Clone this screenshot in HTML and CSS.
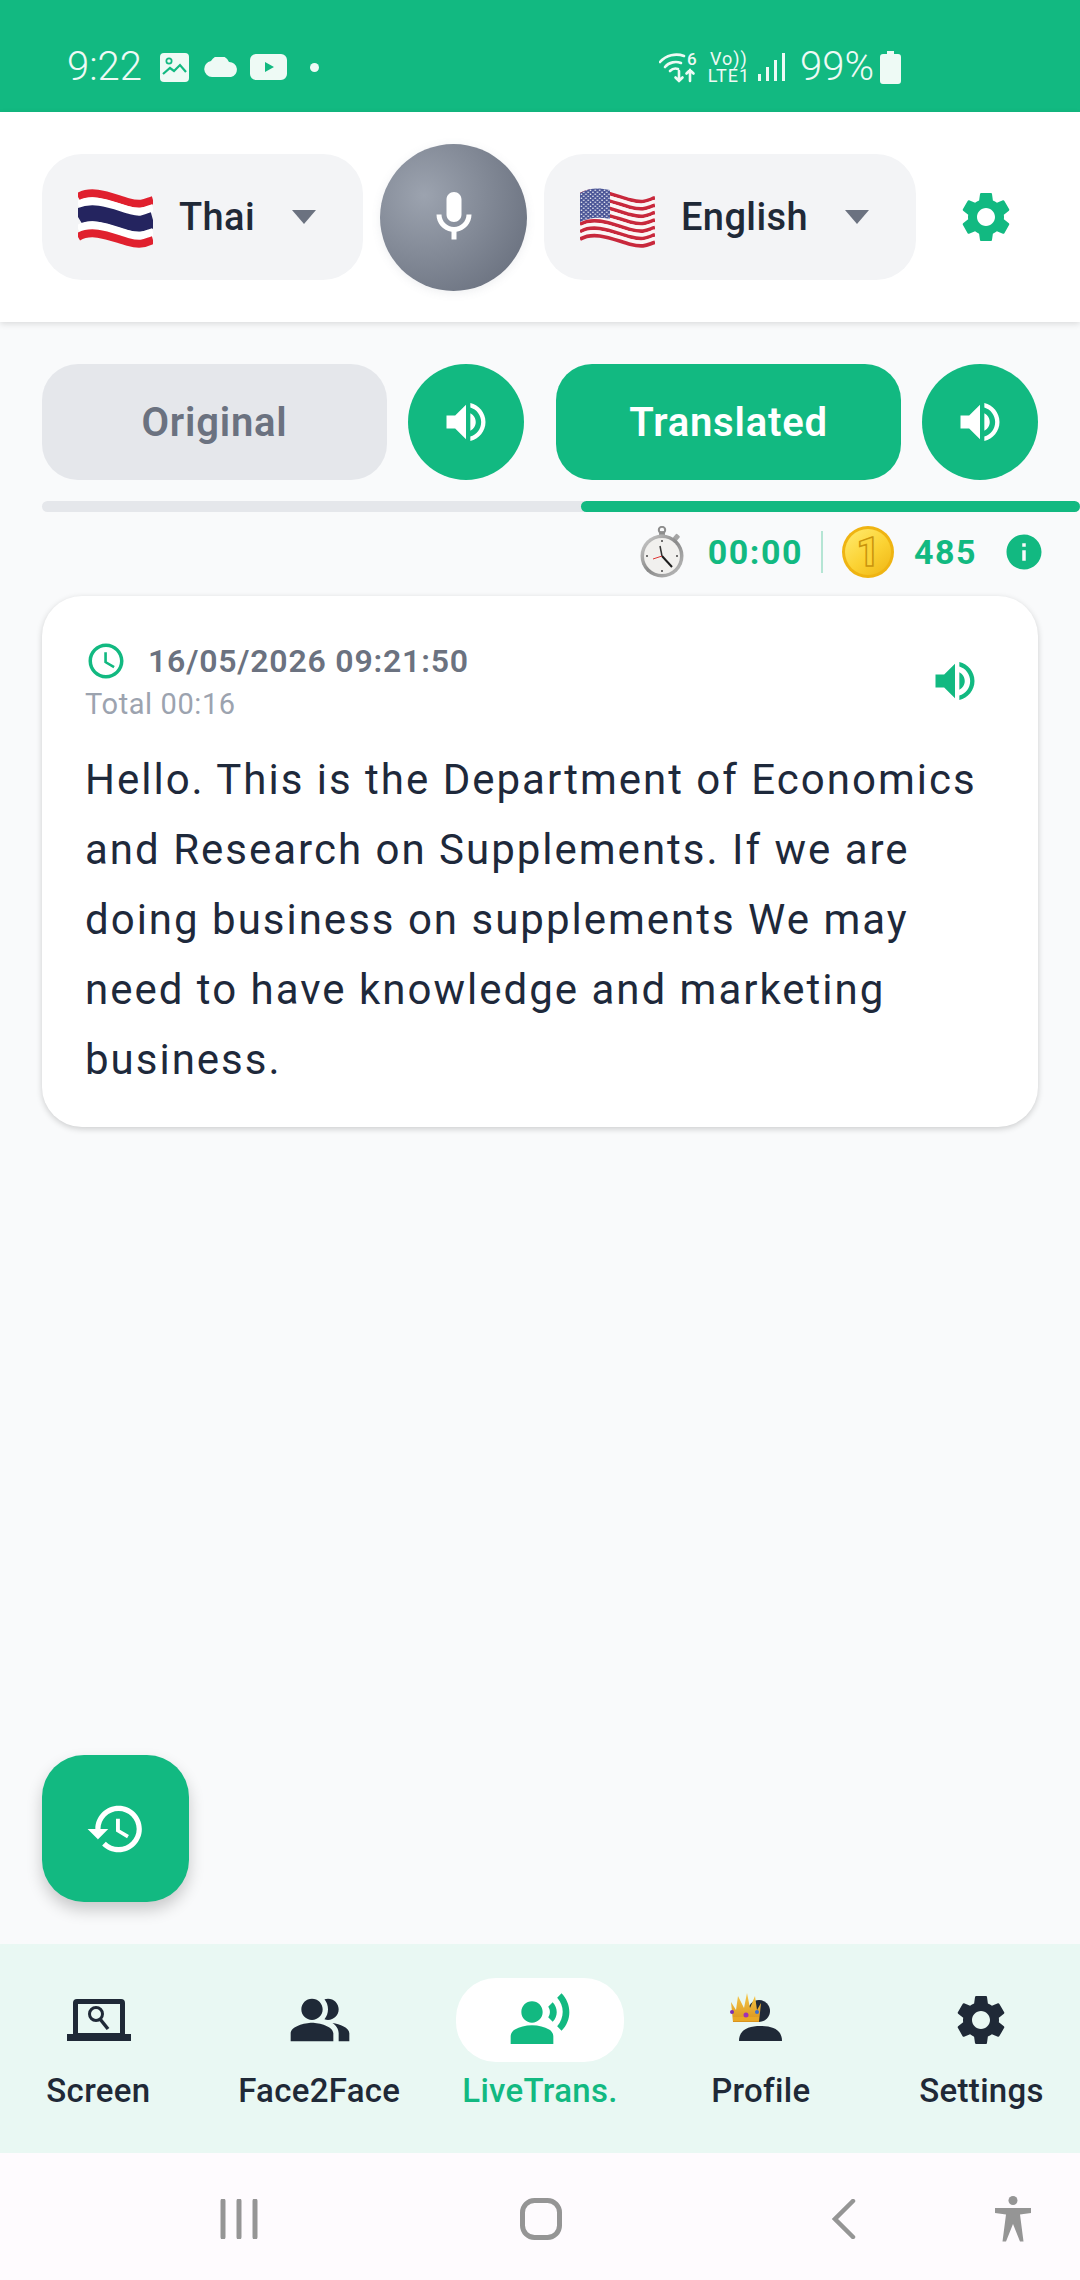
FILE: index.html
```html
<!DOCTYPE html>
<html lang="en">
<head>
    <meta charset="UTF-8">
    <meta name="viewport" content="width=device-width, initial-scale=1.0">
    <title>LiveTrans</title>
    <link rel="stylesheet" href="styles.css">
</head>
<body>
    <!-- shared icons -->
    <svg class="sprite" width="0" height="0">
        <defs>
            <symbol id="i-gear" viewBox="0 0 24 24"><path d="M19.14 12.94c.04-.3.06-.61.06-.94 0-.32-.02-.64-.07-.94l2.03-1.58c.18-.14.23-.41.12-.61l-1.92-3.32c-.12-.22-.37-.29-.59-.22l-2.39.96c-.5-.38-1.03-.7-1.62-.94l-.36-2.54c-.04-.24-.24-.41-.48-.41h-3.84c-.24 0-.43.17-.47.41l-.36 2.54c-.59.24-1.13.57-1.62.94l-2.39-.96c-.22-.08-.47 0-.59.22L2.74 8.87c-.12.21-.08.47.12.61l2.03 1.58c-.05.3-.09.63-.09.94s.02.64.07.94l-2.03 1.58c-.18.14-.23.41-.12.61l1.92 3.32c.12.22.37.29.59.22l2.39-.96c.5.38 1.03.7 1.62.94l.36 2.54c.05.24.24.41.48.41h3.84c.24 0 .44-.17.47-.41l.36-2.54c.59-.24 1.13-.56 1.62-.94l2.39.96c.22.08.47 0 .59-.22l1.92-3.32c.12-.22.07-.47-.12-.61l-2.01-1.58zM12 15.6c-1.98 0-3.6-1.62-3.6-3.6s1.62-3.6 3.6-3.6 3.6 1.62 3.6 3.6-1.62 3.6-3.6 3.6z"/></symbol>
            <symbol id="i-volume" viewBox="0 0 24 24"><path d="M3 9v6h4l5 5V4L7 9H3zm13.5 3c0-1.77-1.02-3.29-2.5-4.03v8.05c1.48-.73 2.5-2.25 2.5-4.02zM14 3.23v2.06c2.89.86 5 3.54 5 6.71s-2.11 5.85-5 6.71v2.06c4.01-.91 7-4.49 7-8.77s-2.99-7.86-7-8.77z"/></symbol>
            <symbol id="i-caret" viewBox="0 0 24 14"><path d="M0 0h24L12 14z"/></symbol>
            <symbol id="i-info" viewBox="0 0 24 24"><path d="M12 2C6.480 2 2 6.480 2 12s4.480 10 10 10 10-4.480 10-10S17.520 2 12 2zm1 15h-2v-6h2v6zm0-8h-2V7h2v2z"/></symbol>
            <path id="wave" d="M0 0C15-9 35 1 50 5S68 5 75 3" fill="none"/>
            <pattern id="stars" width="4.600" height="4" patternUnits="userSpaceOnUse"><circle cx="1.400" cy="1.200" r=".8" fill="#fff"/><circle cx="3.700" cy="3.200" r=".8" fill="#fff"/></pattern>
            <radialGradient id="mic-bg" cx=".3" cy=".35" r=".8"><stop offset="0" stop-color="#9ca3af"/><stop offset="1" stop-color="#6b7280"/></radialGradient>
            <linearGradient id="coin-bg" x1=".1" y1="0" x2=".9" y2="1"><stop offset="0" stop-color="#ffe96b"/><stop offset=".55" stop-color="#fbd233"/><stop offset="1" stop-color="#f0b818"/></linearGradient>
            <linearGradient id="watch-rim" x1="0" y1="0" x2="1" y2="1"><stop offset="0" stop-color="#d4d4d4"/><stop offset=".5" stop-color="#8a8a8a"/><stop offset="1" stop-color="#c2c2c2"/></linearGradient>
            <linearGradient id="crown-bg" x1="0" y1="0" x2="0" y2="1"><stop offset="0" stop-color="#f7c948"/><stop offset="1" stop-color="#d9921c"/></linearGradient>
        </defs>
    </svg>

    <div class="status-bar">
        <div class="status-left">
            <span class="status-time">9:22</span>
            <svg class="st-img" viewBox="0 0 29 29">
                <rect width="29" height="29" rx="4"/>
                <circle cx="9" cy="8" r="3.500" fill="#12b981"/>
                <circle cx="9" cy="8" r="1.800"/>
                <path d="M3 21l7-6 4 3 6-6 6 7" fill="none" stroke="#12b981" stroke-width="2.200"/>
            </svg>
            <svg class="st-cloud" viewBox="0 0 35 20"><path d="M8 20a8 8 0 0 1-1-15.900A10 10 0 0 1 25 5a7.600 7.600 0 0 1 2 15z"/></svg>
            <svg class="st-yt" viewBox="0 0 37 26"><path fill-rule="evenodd" d="M6 0h25a6 6 0 0 1 6 6v14a6 6 0 0 1-6 6H6a6 6 0 0 1-6-6V6a6 6 0 0 1 6-6zM15 8v10l9-5z"/></svg>
            <span class="st-dot"></span>
        </div>
        <div class="status-right">
            <svg class="st-wifi" viewBox="0 -6 40 38">
                <g fill="none" stroke="currentColor" stroke-width="2.600" stroke-linecap="round">
                    <path d="M1 11C7 4 17 2 25 5"/><path d="M6 16c4-5 11-6 16-4"/><path d="M11 20c2-2 5-3 8-2"/>
                    <path d="M20 20v10m-3.500-3.500L20 30l3.500-3.500"/><path d="M31 30V19m-3.500 3.500L31 19l3.500 3.500"/>
                </g>
                <text x="28" y="14" class="st-six">6</text>
            </svg>
            <div class="st-volte"><span>Vo))</span><span>LTE1</span></div>
            <svg class="st-signal" viewBox="0 0 28 28"><path d="M1 21h3v7H1zM9 14h3v14H9zM17 7h3v21h-3zM25 0h3v28h-3z"/></svg>
            <span class="status-pct">99%</span>
            <svg class="st-batt" viewBox="0 0 21 33"><path d="M7 0h7v3h4a3 3 0 0 1 3 3v24a3 3 0 0 1-3 3H3a3 3 0 0 1-3-3V6a3 3 0 0 1 3-3h4z"/></svg>
        </div>
    </div>

    <div class="top-bar">
        <div class="lang-pill lang-thai">
            <svg class="flag" viewBox="0 -7 75 62">
                <use href="#wave" y="4" stroke="#e0202e" stroke-width="8"/>
                <use href="#wave" y="12" stroke="#fff" stroke-width="8"/>
                <use href="#wave" y="24" stroke="#24245f" stroke-width="16"/>
                <use href="#wave" y="36" stroke="#fff" stroke-width="8"/>
                <use href="#wave" y="44" stroke="#e0202e" stroke-width="8"/>
            </svg>
            <span class="lang-name">Thai</span>
            <svg class="caret"><use href="#i-caret"/></svg>
        </div>
        <div class="mic-button">
            <svg class="mic-bg" viewBox="0 0 100 100"><circle cx="50" cy="50" r="50" fill="url(#mic-bg)"/></svg>
            <svg class="mic-icon" viewBox="0 0 24 24"><path d="M12 14c1.660 0 3-1.340 3-3V5c0-1.660-1.340-3-3-3S9 3.340 9 5v6c0 1.660 1.340 3 3 3zM17 11c0 2.760-2.240 5-5 5s-5-2.240-5-5H5c0 3.530 2.610 6.430 6 6.920V21h2v-3.080c3.390-.49 6-3.390 6-6.920h-2z"/></svg>
        </div>
        <div class="lang-pill lang-english">
            <svg class="flag" viewBox="0 -7 75 62">
                <use href="#wave" y="1.850" stroke="#c8283c" stroke-width="3.700"/>
                <use href="#wave" y="5.550" stroke="#fbf5f5" stroke-width="3.700"/>
                <use href="#wave" y="9.250" stroke="#c8283c" stroke-width="3.700"/>
                <use href="#wave" y="12.950" stroke="#fbf5f5" stroke-width="3.700"/>
                <use href="#wave" y="16.650" stroke="#c8283c" stroke-width="3.700"/>
                <use href="#wave" y="20.350" stroke="#fbf5f5" stroke-width="3.700"/>
                <use href="#wave" y="24.050" stroke="#c8283c" stroke-width="3.700"/>
                <use href="#wave" y="27.750" stroke="#fbf5f5" stroke-width="3.700"/>
                <use href="#wave" y="31.450" stroke="#c8283c" stroke-width="3.700"/>
                <use href="#wave" y="35.150" stroke="#fbf5f5" stroke-width="3.700"/>
                <use href="#wave" y="38.850" stroke="#c8283c" stroke-width="3.700"/>
                <use href="#wave" y="42.550" stroke="#fbf5f5" stroke-width="3.700"/>
                <use href="#wave" y="46.250" stroke="#c8283c" stroke-width="3.700"/>
                <path d="M0 0C10-6 20-5 30-3V26C20 24 10 24 0 29z" fill="#4a5596"/>
                <path d="M0 0C10-6 20-5 30-3V26C20 24 10 24 0 29z" fill="url(#stars)"/>
            </svg>
            <span class="lang-name">English</span>
            <svg class="caret"><use href="#i-caret"/></svg>
        </div>
        <svg class="top-gear"><use href="#i-gear"/></svg>
    </div>

    <div class="content">
        <div class="tabs">
            <div class="tab tab-off">Original</div>
            <div class="tab-sound"><svg><use href="#i-volume"/></svg></div>
            <div class="tab tab-on">Translated</div>
            <div class="tab-sound"><svg><use href="#i-volume"/></svg></div>
        </div>
        <div class="progress"><div class="progress-fill"></div></div>

        <div class="stats">
            <svg class="stopwatch" viewBox="0 0 44 52">
                <rect x="19" y="5" width="6" height="5" fill="#9a9a9a"/>
                <circle cx="22" cy="4" r="3.200" fill="none" stroke="#8d8d8d" stroke-width="2"/>
                <rect x="34" y="8" width="5" height="6" rx="1" fill="#a5a5a5" transform="rotate(40 36 11)"/>
                <circle cx="22" cy="30" r="21.500" fill="url(#watch-rim)"/>
                <circle cx="22" cy="30" r="18" fill="#f1f0ee"/>
                <path d="M22 30l10 11" stroke="#1c1c1c" stroke-width="2" fill="none"/>
                <path d="M22 30l-9 3" stroke="#d33" stroke-width="1" fill="none"/>
                <path d="M22 30l-2-10" stroke="#333" stroke-width="1.500" fill="none"/>
                <g fill="#444"><circle cx="22" cy="15" r="1"/><circle cx="22" cy="45" r="1"/><circle cx="7" cy="30" r="1"/><circle cx="37" cy="30" r="1"/></g>
            </svg>
            <span class="stat-num stat-time">00:00</span>
            <span class="stat-sep"></span>
            <svg class="coin" viewBox="0 0 52 52">
                <circle cx="26" cy="26" r="26" fill="#efb412"/>
                <circle cx="26" cy="26" r="23" fill="url(#coin-bg)"/>
                <text x="26" y="40" class="coin-one">1</text>
            </svg>
            <span class="stat-num stat-coins">485</span>
            <svg class="info"><use href="#i-info"/></svg>
        </div>

        <div class="card">
            <div class="card-head">
                <div class="card-meta">
                    <div class="card-date">
                        <svg viewBox="0 0 24 24"><path d="M11.990 2C6.470 2 2 6.480 2 12s4.470 10 9.990 10C17.520 22 22 17.520 22 12S17.520 2 11.990 2zM12 20c-4.420 0-8-3.580-8-8s3.580-8 8-8 8 3.580 8 8-3.580 8-8 8zm.5-13H11v6l5.250 3.150.75-1.230-4.500-2.670z"/></svg>
                        <span>16/05/2026 09:21:50</span>
                    </div>
                    <div class="card-total">Total 00:16</div>
                </div>
                <svg class="card-sound"><use href="#i-volume"/></svg>
            </div>
            <p class="card-text">Hello. This is the Department of Economics and Research on Supplements. If we are doing business on supplements We may need to have knowledge and marketing business.</p>
        </div>

        <div class="fab">
            <svg viewBox="0 0 24 24"><path d="M13 3c-4.970 0-9 4.030-9 9H1l3.890 3.890.07.14L9 12H6c0-3.870 3.130-7 7-7s7 3.130 7 7-3.130 7-7 7c-1.930 0-3.680-.79-4.940-2.060l-1.420 1.420C8.270 19.990 10.510 21 13 21c4.970 0 9-4.030 9-9s-4.030-9-9-9zm-1 5v5l4.280 2.540.72-1.210-3.500-2.080V8H12z"/></svg>
        </div>
    </div>

    <div class="bottom-nav">
        <div class="nav-item">
            <div class="nav-icon">
                <svg class="nav-screen" viewBox="0 0 64 42">
                    <path fill-rule="evenodd" d="M10 0h44a4 4 0 0 1 4 4v31h6v7H0v-7h6V4a4 4 0 0 1 4-4zm1 5v29h42V5z"/>
                    <circle cx="29" cy="15" r="6.500" fill="none" stroke="currentColor" stroke-width="3"/>
                    <path d="M33 20l8 10" stroke="currentColor" stroke-width="3.500" fill="none"/>
                </svg>
            </div>
            <span>Screen</span>
        </div>
        <div class="nav-item">
            <div class="nav-icon">
                <svg class="nav-people" viewBox="0 0 24 24"><path d="M16.670 13.130C18.040 14.060 19 15.320 19 17v3h4v-3c0-2.180-3.570-3.470-6.330-3.870zM15 12c2.210 0 4-1.790 4-4s-1.790-4-4-4c-.47 0-.91.1-1.330.24C14.500 5.270 15 6.580 15 8s-.5 2.730-1.330 3.760c.42.14.86.24 1.330.24zM9 12c2.210 0 4-1.790 4-4s-1.790-4-4-4-4 1.790-4 4 1.790 4 4 4zM9 13c-2.670 0-8 1.340-8 4v3h16v-3c0-2.660-5.330-4-8-4z"/></svg>
            </div>
            <span>Face2Face</span>
        </div>
        <div class="nav-item nav-active">
            <div class="nav-icon">
                <svg class="nav-live" viewBox="0 0 24 24"><path d="M9 13c2.210 0 4-1.790 4-4s-1.790-4-4-4-4 1.790-4 4 1.790 4 4 4zM15.390 15.560C13.710 14.700 11.530 14 9 14s-4.710.7-6.390 1.560C1.610 16.070 1 17.100 1 18.220V21h16v-2.780c0-1.120-.61-2.150-1.610-2.660zM16.760 5.360l-1.680 1.690c.84 1.180.84 2.710 0 3.890l1.680 1.690c2.020-2.020 2.020-5.070 0-7.270zM20.070 2l-1.630 1.630c2.770 3.020 2.770 7.560 0 10.740L20.070 16c3.900-3.890 3.910-9.950 0-14z"/></svg>
            </div>
            <span>LiveTrans.</span>
        </div>
        <div class="nav-item">
            <div class="nav-icon">
                <svg class="nav-profile" viewBox="0 0 62 54">
                    <circle cx="29" cy="18" r="11" fill="currentColor"/>
                    <path d="M9 48c0-11 9-15 21.500-15S52 37 52 48z" fill="currentColor"/>
                    <path d="M1 9l5 8 2-14 6 12 3-15 3 15 5-12 2 14 4-7-2 19H3z" fill="url(#crown-bg)"/>
                    <rect x="3" y="24" width="26" height="4" fill="#e9a825"/>
                    <circle cx="2" cy="19" r="2" fill="#7a2fb5"/><circle cx="16" cy="22" r="2.500" fill="#a12fb5"/><circle cx="27" cy="19" r="2" fill="#3a6fd0"/>
                </svg>
            </div>
            <span>Profile</span>
        </div>
        <div class="nav-item">
            <div class="nav-icon">
                <svg class="nav-gear"><use href="#i-gear"/></svg>
            </div>
            <span>Settings</span>
        </div>
    </div>

    <div class="sys-nav">
        <svg class="sys-recent" viewBox="0 0 38 40"><path d="M3 2v36M19 2v36M35 2v36"/></svg>
        <svg class="sys-home" viewBox="0 0 42 42"><rect x="2.500" y="2.500" width="37" height="37" rx="12"/></svg>
        <svg class="sys-back" viewBox="0 0 24 40"><path d="M21 2L3 20l18 18"/></svg>
        <svg class="sys-access" viewBox="0 0 38 46"><circle cx="19" cy="4.500" r="4.500"/><path d="M1 12h36v5l-11 1.500 3.500 27H26L19 28l-7 17.500H8.500l3.500-27L1 17z"/></svg>
    </div>
</body>
</html>
```

FILE: styles.css
```css
* {
    box-sizing: border-box;
}

body {
    font-family: Roboto, "Noto Sans", sans-serif;
    margin: 0;
    width: 1080px;
    height: 2280px;
    overflow: hidden;
    display: flex;
    flex-direction: column;
    background-color: #f9fafb;
    color: #1f2937;
}

.sprite {
    position: absolute;
}

svg {
    display: block;
    fill: currentColor;
    flex: none;
}

/* status bar */
.status-bar {
    height: 112px;
    background-color: #12b981;
    color: #eefaf5;
    display: flex;
    justify-content: space-between;
    align-items: center;
    padding: 22px 179px 0 67px;
    flex: none;
}

.status-left,
.status-right {
    display: flex;
    align-items: center;
}

.status-time,
.status-pct {
    font-size: 40px;
    font-weight: 350;
    line-height: 40px;
}

.st-img {
    width: 29px;
    height: 29px;
    margin-left: 18px;
}

.st-cloud {
    width: 35px;
    height: 20px;
    margin-left: 15px;
}

.st-yt {
    width: 37px;
    height: 26px;
    margin-left: 11px;
}

.st-dot {
    width: 9px;
    height: 9px;
    border-radius: 50%;
    background-color: #eefaf5;
    margin-left: 23px;
}

.st-wifi {
    width: 40px;
    height: 38px;
    margin-top: -6px;
}

.st-six {
    font-size: 17px;
    font-weight: 500;
    fill: currentColor;
}

.st-volte {
    display: flex;
    flex-direction: column;
    align-items: center;
    font-size: 18px;
    font-weight: 400;
    line-height: 17px;
    letter-spacing: 1px;
    margin-left: 9px;
}

.st-signal {
    width: 28px;
    height: 28px;
    margin-left: 7px;
}

.status-pct {
    margin-left: 15px;
}

.st-batt {
    width: 21px;
    height: 33px;
    margin-left: 6px;
}

/* language bar */
.top-bar {
    height: 210px;
    background-color: #fff;
    box-shadow: 0 2px 6px rgba(0, 0, 0, 0.12);
    display: flex;
    align-items: center;
    padding-left: 42px;
    flex: none;
    position: relative;
}

.lang-pill {
    height: 126px;
    border-radius: 40px;
    background-color: #f3f4f6;
    display: flex;
    align-items: center;
    padding-left: 36px;
}

.lang-thai {
    width: 321px;
}

.lang-english {
    width: 372px;
}

.flag {
    width: 75px;
    height: 62px;
}

.lang-name {
    font-size: 38px;
    font-weight: 500;
    letter-spacing: 0.4px;
    margin-left: 26px;
}

.caret {
    width: 24px;
    height: 14px;
    color: #6b7280;
    margin-left: 37px;
}

.mic-button {
    width: 147px;
    height: 147px;
    margin: 0 17px;
    position: relative;
    display: flex;
    align-items: center;
    justify-content: center;
    border-radius: 50%;
    box-shadow: 0 2px 10px rgba(107, 114, 128, 0.12);
}

.mic-bg {
    position: absolute;
    inset: 0;
}

.mic-icon {
    width: 60px;
    height: 60px;
    color: #fff;
    position: relative;
}

.top-gear {
    width: 60px;
    height: 60px;
    color: #12b981;
    margin-left: 40px;
}

/* content */
.content {
    flex: 1;
    display: flex;
    flex-direction: column;
    align-items: flex-start;
    padding: 42px 42px 42px;
    min-height: 0;
}

.tabs {
    width: 996px;
    display: flex;
    align-items: center;
}

.tab {
    width: 345px;
    height: 116px;
    border-radius: 36px;
    display: flex;
    align-items: center;
    justify-content: center;
    font-size: 40px;
    font-weight: 600;
    letter-spacing: 0.8px;
}

.tab-off {
    background-color: #e5e7eb;
    color: #6b7280;
}

.tab-on {
    background-color: #12b981;
    color: #fff;
    margin-left: 32px;
}

.tab-sound {
    width: 116px;
    height: 116px;
    border-radius: 50%;
    background-color: #12b981;
    color: #fff;
    margin-left: 21px;
    display: flex;
    align-items: center;
    justify-content: center;
}

.tab-sound svg {
    width: 52px;
    height: 52px;
}

.progress {
    width: 1038px;
    height: 11px;
    margin-top: 21px;
    border-radius: 6px;
    background-color: #e5e7eb;
    display: flex;
    justify-content: flex-end;
}

.progress-fill {
    width: 499px;
    border-radius: 6px;
    background-color: #12b981;
}

.stats {
    width: 996px;
    height: 52px;
    margin-top: 14px;
    display: flex;
    align-items: center;
    justify-content: flex-end;
    color: #12b981;
}

.stopwatch {
    width: 44px;
    height: 52px;
}

.stat-num {
    font-size: 34px;
    font-weight: 700;
    letter-spacing: 1.5px;
}

.stat-time {
    margin-left: 24px;
}

.stat-sep {
    width: 2px;
    height: 42px;
    background-color: #b5e5d4;
    margin: 0 19px 0 18px;
}

.coin {
    width: 52px;
    height: 52px;
}

.coin-one {
    font-size: 40px;
    font-weight: 900;
    text-anchor: middle;
    fill: #fbd43a;
    stroke: #c9930c;
    stroke-width: 1.5;
}

.stat-coins {
    margin-left: 20px;
}

.info {
    width: 42px;
    height: 42px;
    margin-left: 26px;
    margin-right: -7px;
}

/* transcript card */
.card {
    width: 996px;
    margin-top: 18px;
    padding: 44px 43px 32px;
    background-color: #fff;
    border-radius: 40px;
    box-shadow: 0 2px 6px rgba(0, 0, 0, 0.18);
}

.card-head {
    display: flex;
    justify-content: space-between;
    align-items: center;
}

.card-date {
    display: flex;
    align-items: center;
    color: #6b7280;
    font-size: 32px;
    font-weight: 600;
    letter-spacing: 0.8px;
    height: 42px;
}

.card-date svg {
    width: 42px;
    height: 42px;
    color: #12b981;
    margin-right: 21px;
}

.card-total {
    color: #9ca3af;
    font-size: 29px;
    letter-spacing: 0.6px;
    line-height: 34px;
    margin-top: 5px;
}

.card-sound {
    width: 52px;
    height: 52px;
    color: #12b981;
    margin-right: 14px;
}

.card-text {
    margin: 24px 0 0;
    font-size: 42px;
    line-height: 70px;
    letter-spacing: 2px;
    color: #1e293b;
}

.fab {
    width: 147px;
    height: 147px;
    margin-top: auto;
    border-radius: 42px;
    background-color: #12b981;
    color: #fff;
    box-shadow: 0 8px 16px rgba(0, 0, 0, 0.2);
    display: flex;
    align-items: center;
    justify-content: center;
}

.fab svg {
    width: 62px;
    height: 62px;
}

/* bottom nav */
.bottom-nav {
    height: 209px;
    background-color: #e9f8f3;
    display: grid;
    grid-template-columns: repeat(5, 1fr);
    margin: 0 -12px;
    padding: 34px 0 0;
    flex: none;
}

.nav-item {
    display: flex;
    flex-direction: column;
    align-items: center;
    font-size: 33px;
    font-weight: 500;
    letter-spacing: 0.3px;
}

.nav-icon {
    width: 168px;
    height: 84px;
    border-radius: 40px;
    display: flex;
    align-items: center;
    justify-content: center;
    margin-bottom: 9px;
}

.nav-active {
    color: #12b981;
}

.nav-active .nav-icon {
    background-color: #fff;
}

.nav-screen {
    width: 64px;
    height: 42px;
    margin-left: 2px;
}

.nav-people,
.nav-live {
    width: 64px;
    height: 64px;
}

.nav-people {
    margin-left: 2px;
}

.nav-profile {
    width: 62px;
    height: 54px;
}

.nav-gear {
    width: 60px;
    height: 60px;
    margin-right: 2px;
}

/* android nav */
.sys-nav {
    height: 127px;
    background-color: #fefbfe;
    color: #959595;
    display: flex;
    align-items: center;
    padding: 5px 48px 0 220px;
    flex: none;
}

.sys-nav svg {
    fill: none;
    stroke: currentColor;
    stroke-linecap: round;
}

.sys-recent {
    width: 38px;
    height: 40px;
    stroke-width: 5;
}

.sys-home {
    width: 42px;
    height: 42px;
    stroke-width: 5;
    margin-left: 262px;
}

.sys-back {
    width: 24px;
    height: 40px;
    stroke-width: 4.5;
    margin-left: 270px;
}

.sys-nav .sys-access {
    width: 38px;
    height: 46px;
    fill: currentColor;
    stroke: none;
    margin-left: 138px;
}
```
